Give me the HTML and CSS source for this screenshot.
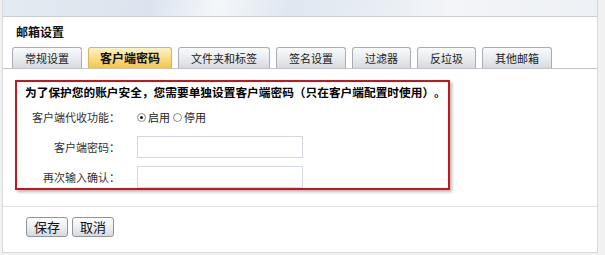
FILE: index.html
```html
<!DOCTYPE html>
<html lang="zh-CN">
  <head>
    <meta charset="utf-8" />
    <title>邮箱设置</title>
    <link rel="stylesheet" href="styles.css">
  </head>

  <body>
    <div class="panel">
      <div class="topbar"></div>
      <div class="title">邮箱设置</div>

      <div class="tabs">
        <div class="tab">常规设置</div>
        <div class="tab active">客户端密码</div>
        <div class="tab">文件夹和标签</div>
        <div class="tab">签名设置</div>
        <div class="tab">过滤器</div>
        <div class="tab">反垃圾</div>
        <div class="tab">其他邮箱</div>
      </div>

      <div class="content">
        <div class="box">
          <div class="notice">为了保护您的账户安全，您需要单独设置客户端密码（只在客户端配置时使用）。</div>

          <div class="row first">
            <span class="label">客户端代收功能：</span>
            <span class="radio checked"></span><span class="opt">启用</span>
            <span class="radio"></span><span class="opt">停用</span>
          </div>

          <div class="row">
            <span class="label">客户端密码：</span>
            <input class="field" type="password" />
          </div>

          <div class="row">
            <span class="label">再次输入确认：</span>
            <input class="field" type="password" />
          </div>
        </div>
      </div>

      <div class="footer">
        <button class="btn">保存</button>
        <button class="btn">取消</button>
      </div>
    </div>
  </body>
</html>
```

FILE: styles.css
```css
body {
  margin: 0;
  background-color: #f1f1f1;
  font-family: "Noto Sans CJK SC", "Liberation Sans", sans-serif;
  font-size: 11px;
  color: #222;
  text-spacing-trim: space-all;
}

.panel {
  margin-left: 2px;
  width: 594px;
  background: #ffffff;
  border: 1px solid #d9d9d9;
  border-top: none;
}

.topbar {
  height: 16px;
  border-bottom: 1px solid #c9ccd0;
  background: linear-gradient(100deg, #e4eaf1 0%, #dbe4ee 25%, #f4f7fa 36%, #dfe7f0 48%, #e7edf3 62%, #f3f5f8 75%, #edf0f4 100%);
}

.title {
  height: 30px;
  padding-left: 13px;
  line-height: 29px;
  font-size: 12px;
  font-weight: bold;
  color: #111;
}

.tabs {
  display: flex;
  gap: 6px;
  height: 21px;
  padding-left: 9px;
  border-bottom: 1px solid #c4c4c4;
}

.tab {
  height: 20px;
  padding: 0 12px;
  line-height: 20px;
  border: 1px solid #a9adb2;
  border-bottom: none;
  border-radius: 3px 3px 0 0;
  background: linear-gradient(#f9fafb, #e9ecef 50%, #d6dadf);
  color: #222;
}

.tab.active {
  padding: 0 11px;
  font-size: 12px;
  font-weight: bold;
  border-color: #d9b45a;
  background: linear-gradient(#fff3c4, #fbdc83 50%, #f6c44c);
  color: #111;
}

.content {
  padding: 11px 0 16px 12px;
  border-bottom: 1px solid #e2e2e2;
}

.box {
  width: 431px;
  height: 106px;
  border: 2px solid #c4161c;
  box-shadow: 2px 2px 3px rgba(0, 0, 0, 0.28);
}

.notice {
  padding-left: 8px;
  line-height: 20px;
  font-size: 11.7px;
  font-weight: bold;
  color: #000;
  white-space: nowrap;
}

.row {
  display: flex;
  align-items: center;
  height: 22px;
  margin-top: 8px;
}

.row.first {
  margin-top: 4px;
}

.label {
  width: 103px;
  margin-right: 17px;
  text-align: right;
  color: #333;
}

.radio {
  width: 7px;
  height: 7px;
  border: 1px solid #8a8a8a;
  border-radius: 50%;
  background: #fff;
  margin-right: 2px;
  position: relative;
}

.radio.checked:after {
  content: "";
  position: absolute;
  left: 2px;
  top: 2px;
  width: 3px;
  height: 3px;
  border-radius: 50%;
  background: #111;
}

.opt {
  margin-right: 3px;
  color: #222;
}

.field {
  box-sizing: border-box;
  width: 166px;
  height: 22px;
  margin: 0;
  border: 1px solid #d4d9e1;
  background: #fff;
}

.footer {
  padding: 10px 0 15px 23px;
  display: flex;
  gap: 4px;
}

.btn {
  width: 42px;
  height: 20px;
  padding: 0;
  font-family: "Noto Sans CJK SC", sans-serif;
  font-size: 13px;
  line-height: 18px;
  color: #111;
  border: 1px solid #8f959d;
  border-radius: 3px;
  background: linear-gradient(#fdfdfd, #eceef1 50%, #d5dae1);
}
```
